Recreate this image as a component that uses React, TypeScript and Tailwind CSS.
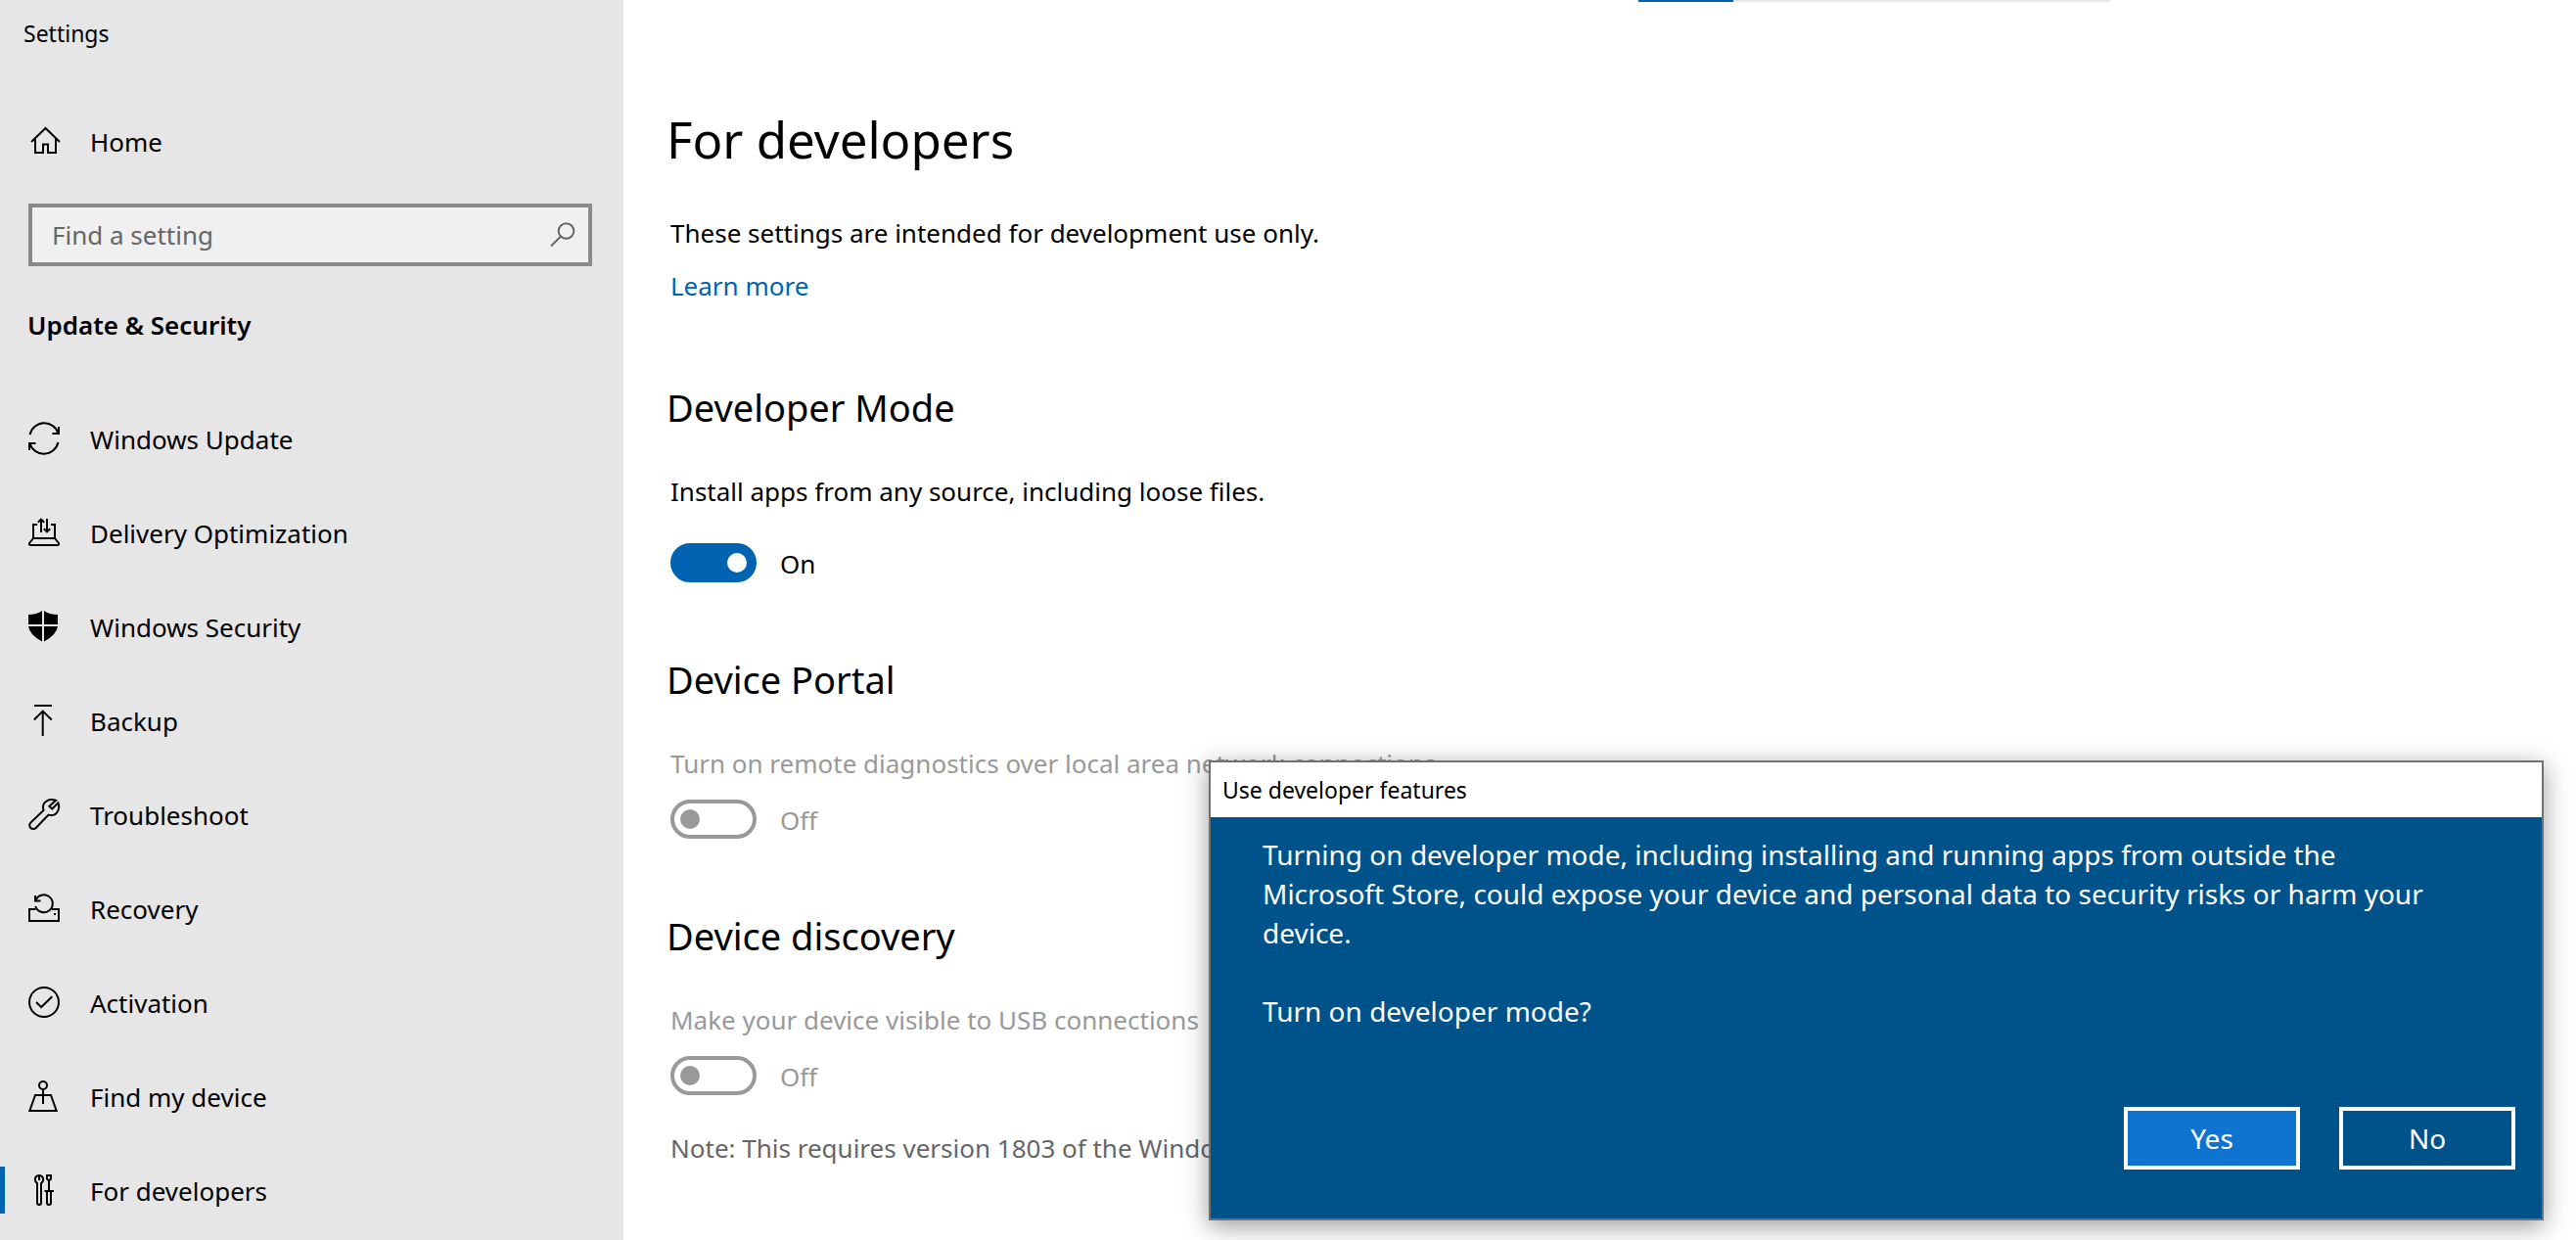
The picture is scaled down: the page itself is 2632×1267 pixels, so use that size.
import React from "react";

function Icon({ children, className = "" }: { children: React.ReactNode; className?: string }) {
  return (
    <svg
      viewBox="0 0 32 32"
      aria-hidden="true"
      className={`size-8 shrink-0 overflow-visible ${className}`}
      fill="none"
      stroke="currentColor"
      strokeWidth="2"
    >
      {children}
    </svg>
  );
}

const HomeIcon = (
  <Icon>
    <path d="M3 17 L17.5 3 L32 17 M7 13.5 V28 H15 V19.5 H20 V28 H28 V13.5" />
  </Icon>
);

const UpdateIcon = (
  <Icon>
    <path d="M1.6 12 A15 15 0 0 1 30.6 11 M32 11 H24.5 M31 4 V12" />
    <path d="M30.4 20 A15 15 0 0 1 1.4 21 M0 21 H7.5 M1 28 V20" />
  </Icon>
);

const DeliveryIcon = (
  <Icon>
    <path d="M9 8 H5 V22 H27 V8 H23" />
    <path d="M5 22 L1 27 V28 Q1 29 2 29 H30 Q31 29 31 28 V27 L27 22" />
    <path d="M13 16 V3 M9.8 5.8 L13 2.6 L16.2 5.8 M19 2 V15 M15.8 12.2 L19 15.4 L22.2 12.2" />
  </Icon>
);

const ShieldIcon = (
  <Icon>
    <g fill="currentColor" stroke="none">
      <path d="M14 0 V14 H0 V4 Q9 4 14 0 Z" />
      <path d="M16 0 Q21 4 30 4 V14 H16 Z" />
      <path d="M0 16 H14 V31.5 Q1.5 25 0 16 Z" />
      <path d="M16 16 H30 Q28.5 25 16 31.5 Z" />
    </g>
  </Icon>
);

const BackupIcon = (
  <Icon>
    <path d="M6 1 H24 M14.7 32 V7 M5.8 15.5 L14.7 6.6 L23.8 15.5" />
  </Icon>
);

const WrenchIcon = (
  <Icon>
    <path d="M28 1.8 C21 -0.8 15 3.5 15 8.5 C15 9.8 15.2 11 15.5 12 L2.3 24.6 A3.8 3.8 0 0 0 7.7 30 L20.5 16.6 C21.5 16.9 22.5 17 23.5 17 C28.5 17 33 11 30.4 4.4 L24.3 10.5 L21.4 7.8 Z" />
  </Icon>
);

const RecoveryIcon = (
  <Icon>
    <path d="M7.5 17 H1 V29 H31 V17 H24" />
    <path d="M7.2 8.5 A9 9 0 1 1 7.2 14 M7 3 V8.5 H12.5" />
    <path d="M26 22 H28" />
  </Icon>
);

const ActivationIcon = (
  <Icon>
    <circle cx="16" cy="16" r="15" />
    <path d="M8 16 L13.2 21 L24.3 10.2" />
  </Icon>
);

const FindDeviceIcon = (
  <Icon>
    <circle cx="15" cy="5" r="4" />
    <path d="M15 9 V24 M10 15 H7 L1.3 31 H28.7 L23 15 H10" />
  </Icon>
);

const DeveloperIcon = (
  <Icon>
    <path d="M9 9 Q6.8 7.5 6.8 5 Q7 1.5 11 1 Q15 1.5 15.2 5 Q15.2 7.5 13 9 V29 Q13 31 11 31 Q9 31 9 29 Z M11 1 V6" />
    <path d="M19 1 H23 V4.5 L21 6.5 L19 4.5 Z M21 6.5 V17 M16.5 17 H26 M19 17 V29 Q19 31 21 31 Q23 31 23 29 V17" />
  </Icon>
);

const navItems = [
  { label: "Windows Update", icon: UpdateIcon },
  { label: "Delivery Optimization", icon: DeliveryIcon },
  { label: "Windows Security", icon: ShieldIcon },
  { label: "Backup", icon: BackupIcon },
  { label: "Troubleshoot", icon: WrenchIcon },
  { label: "Recovery", icon: RecoveryIcon },
  { label: "Activation", icon: ActivationIcon },
  { label: "Find my device", icon: FindDeviceIcon },
  { label: "For developers", icon: DeveloperIcon, current: true },
];

function Sidebar() {
  return (
    <aside className="w-[637px] shrink-0 bg-[#e6e6e6]">
      <div className="pt-4 pl-6 text-[23px] leading-9">Settings</div>
      <a href="#home" className="mt-15 flex h-16 items-center gap-[31px] pl-[29px]">
        {HomeIcon}
        <span className="pt-0.5">Home</span>
      </a>
      <div className="relative mt-8 mr-8 ml-[29px]">
        <input
          type="search"
          aria-label="Find a setting"
          placeholder="Find a setting"
          className="block h-16 w-full border-4 border-[#8a8a8a] bg-[#f0f0f0] pr-16 pl-5 outline-none placeholder:text-[#666666] placeholder:opacity-100"
        />
        <svg
          viewBox="0 0 28 28"
          aria-hidden="true"
          className="absolute top-4.5 right-4 size-7 text-[#666666]"
          fill="none"
          stroke="currentColor"
          strokeWidth="2"
        >
          <circle cx="17.5" cy="10" r="7.8" />
          <path d="M12 15.5 L2 25.5" />
        </svg>
      </div>
      <h2 className="mt-11 pl-7 text-[26px] leading-8 font-semibold">Update &amp; Security</h2>
      <nav className="mt-13">
        {navItems.map((item) => (
          <a
            key={item.label}
            href="#section"
            aria-current={item.current ? "page" : undefined}
            className="relative flex h-24 items-center gap-[31px] pl-[29px]"
          >
            {item.current && <span className="absolute left-0 h-12 w-[5px] bg-[#0063b1]" />}
            {item.icon}
            <span className="pt-0.5">{item.label}</span>
          </a>
        ))}
      </nav>
    </aside>
  );
}

function Toggle({ on = false, label }: { on?: boolean; label: string }) {
  return (
    <label className={on ? "flex w-fit items-center gap-6" : "flex w-fit items-center gap-6 text-[#999999]"}>
      <input
        type="checkbox"
        role="switch"
        aria-label={label}
        defaultChecked={on}
        disabled={!on}
        className="flex h-10 w-[88px] appearance-none items-center rounded-full border-4 border-[#999999] px-1.5 before:size-5 before:rounded-full before:bg-[#999999] checked:justify-end checked:border-[#0063b1] checked:bg-[#0063b1] checked:before:bg-white"
      />
      <span className="pt-0.5">{on ? "On" : "Off"}</span>
    </label>
  );
}

function Section({ title, children }: { title: string; children: React.ReactNode }) {
  return (
    <section className="mt-[73px]">
      <h2 className="text-[38px] leading-[52px]">{title}</h2>
      <div className="mt-[42px] pl-1">{children}</div>
    </section>
  );
}

function DeveloperDialog() {
  return (
    <div
      role="dialog"
      aria-labelledby="dialog-title"
      className="absolute right-[33px] bottom-5 w-[1364px] border-2 border-[#707070] bg-[#00528a] shadow-[0_6px_24px_rgba(0,0,0,0.4)]"
    >
      <h2 id="dialog-title" className="bg-white pl-3 text-[23px] leading-14">
        Use developer features
      </h2>
      <div className="pt-[18px] pr-26 pl-[53px] text-[28px] leading-10 text-white">
        <p>
          Turning on developer mode, including installing and running apps from outside the Microsoft
          Store, could expose your device and personal data to security risks or harm your device.
        </p>
        <p className="mt-10">Turn on developer mode?</p>
      </div>
      <div className="mt-[78px] flex justify-end gap-10 pr-[27px] pb-[50px] text-[28px] text-white">
        <button type="button" className="h-16 w-[180px] border-4 border-white bg-[#0f74cf]">
          Yes
        </button>
        <button type="button" className="h-16 w-[180px] border-4 border-white">
          No
        </button>
      </div>
    </div>
  );
}

export default function App() {
  return (
    <div className="relative flex min-h-screen overflow-hidden bg-white font-['Noto_Sans',sans-serif] text-[26px] leading-9 text-black">
      <Sidebar />
      <main className="min-w-0 flex-1">
        <div className="ml-[52%] h-0.5 w-[482px] bg-[#e6e6e6]">
          <div className="h-full w-1/5 bg-[#0063b1]" />
        </div>
        <div className="pt-26 pl-11 whitespace-nowrap">
          <h1 className="text-[51px] leading-[72px]">For developers</h1>
          <div className="mt-[42px] pl-1">
            <p>These settings are intended for development use only.</p>
            <a href="#learn-more" className="mt-[18px] block w-fit text-[#0063b1]">
              Learn more
            </a>
          </div>
          <div className="mt-20">
            <Section title="Developer Mode">
              <p className="mb-[35px]">Install apps from any source, including loose files.</p>
              <Toggle on label="Developer Mode" />
            </Section>
          </div>
          <Section title="Device Portal">
            <p className="mb-[19px] text-[#999999]">
              Turn on remote diagnostics over local area network connections.
            </p>
            <Toggle label="Device Portal" />
          </Section>
          <Section title="Device discovery">
            <p className="mb-[19px] text-[#999999]">Make your device visible to USB connections</p>
            <Toggle label="Device discovery" />
            <p className="mt-9 text-[#666666]">
              Note: This requires version 1803 of the Windows 10 SDK or later.
            </p>
          </Section>
        </div>
      </main>
      <DeveloperDialog />
    </div>
  );
}
